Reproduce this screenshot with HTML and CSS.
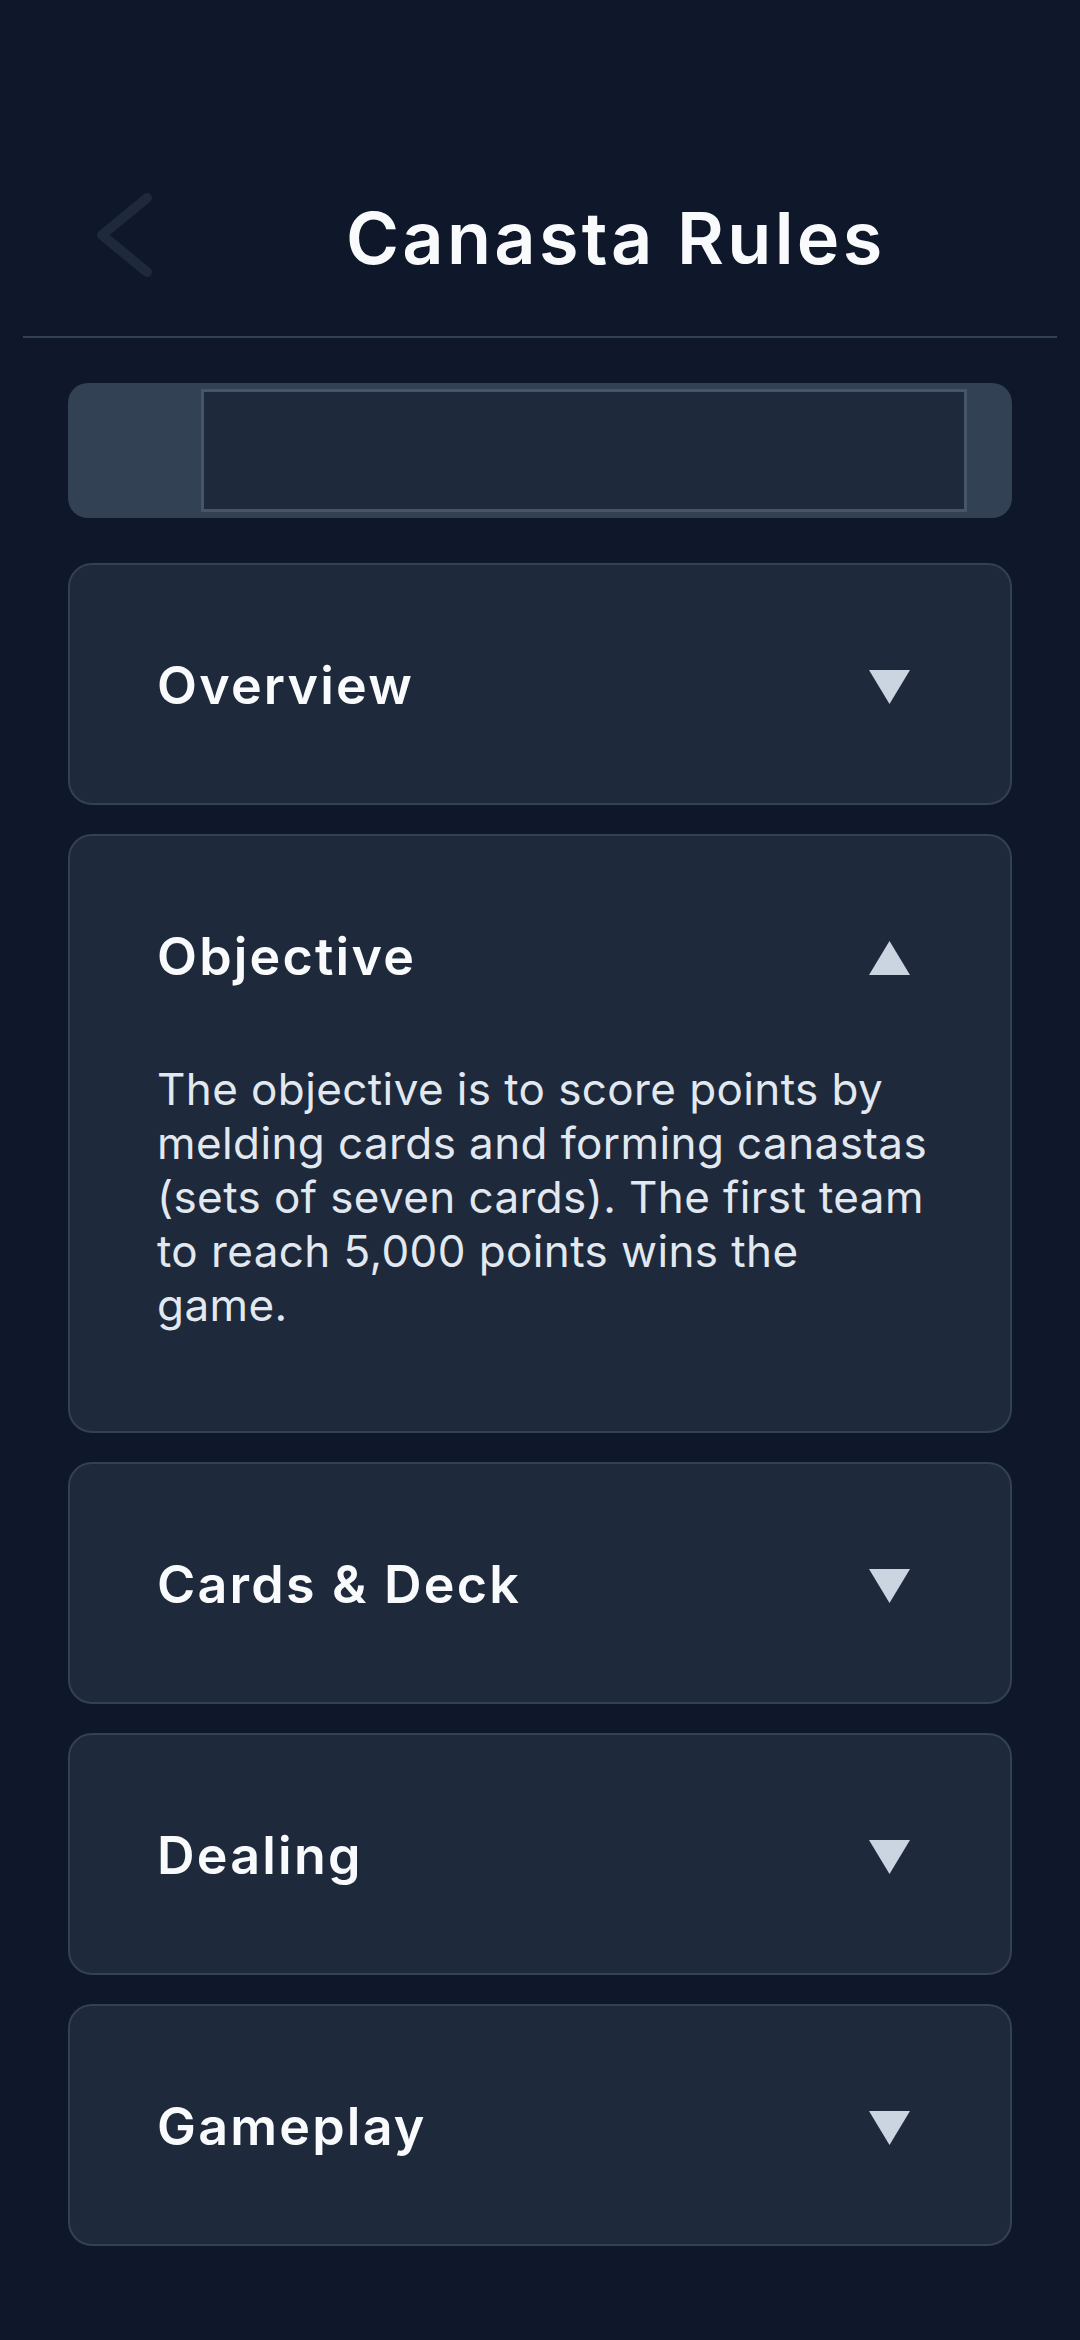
FILE: index.html
```html
<!DOCTYPE html>
<html lang="en">
<head>
<meta charset="utf-8">
<title>Canasta Rules</title>
<link rel="stylesheet" href="styles.css">
</head>
<body>
<div class="app">
  <header class="topbar">
    <button class="back" aria-label="Back">
      <svg width="64" height="96" viewBox="0 0 64 96"><polyline points="54,8 9,45 54,82" fill="none" stroke="#1e293b" stroke-width="10" stroke-linecap="round" stroke-linejoin="round"/></svg>
    </button>
    <h1 class="title">Canasta Rules</h1>
  </header>

  <div class="search">
    <input class="search-input" type="text" aria-label="Search rules">
  </div>

  <div class="list">
    <section class="card">
      <div class="card-head">
        <h2 class="card-title">Overview</h2>
        <svg class="arrow" width="41" height="34" viewBox="0 0 41 34"><polygon points="0,0 41,0 20.5,34" fill="#cbd5e1"/></svg>
      </div>
    </section>

    <section class="card open">
      <div class="card-head">
        <h2 class="card-title">Objective</h2>
        <svg class="arrow" width="41" height="34" viewBox="0 0 41 34"><polygon points="20.5,0 41,34 0,34" fill="#cbd5e1"/></svg>
      </div>
      <p class="card-body">The objective is to score points by melding cards and forming canastas (sets of seven cards). The first team to reach 5,000 points wins the game.</p>
    </section>

    <section class="card">
      <div class="card-head">
        <h2 class="card-title">Cards &amp; Deck</h2>
        <svg class="arrow" width="41" height="34" viewBox="0 0 41 34"><polygon points="0,0 41,0 20.5,34" fill="#cbd5e1"/></svg>
      </div>
    </section>

    <section class="card">
      <div class="card-head">
        <h2 class="card-title">Dealing</h2>
        <svg class="arrow" width="41" height="34" viewBox="0 0 41 34"><polygon points="0,0 41,0 20.5,34" fill="#cbd5e1"/></svg>
      </div>
    </section>

    <section class="card">
      <div class="card-head">
        <h2 class="card-title">Gameplay</h2>
        <svg class="arrow" width="41" height="34" viewBox="0 0 41 34"><polygon points="0,0 41,0 20.5,34" fill="#cbd5e1"/></svg>
      </div>
    </section>
  </div>
</div>
</body>
</html>
```

FILE: styles.css
```css
* { box-sizing: border-box; }

html, body {
  margin: 0;
  padding: 0;
  background: #0f172a;
}

body {
  font-family: Inter, "Noto Sans", "Liberation Sans", sans-serif;
  color: #f8fafc;
  min-height: 2340px;
}

.app {
  display: flex;
  flex-direction: column;
}

.topbar {
  margin: 0 23px;
  height: 338px;
  padding-top: 140px;
  border-bottom: 2px solid #334155;
  display: flex;
  align-items: center;
}

.back {
  margin-left: 70px;
  width: 64px;
  height: 96px;
  padding: 0;
  border: 0;
  background: transparent;
  display: flex;
}

.title {
  margin: 0 0 0 189px;
  font-size: 72px;
  line-height: 88px;
  font-weight: 600;
  letter-spacing: 3.3px;
  color: #f8fafc;
}

.search {
  margin: 45px 68px 0;
  height: 135px;
  background: #334155;
  border-radius: 20px;
  padding: 6px 45px 6px 133px;
  display: flex;
}

.search-input {
  flex: 1;
  height: 100%;
  margin: 0;
  border: 3px solid #475569;
  background: #1e293b;
  border-radius: 0;
  outline: none;
}

.list {
  margin: 45px 68px 0;
  display: flex;
  flex-direction: column;
  gap: 29px;
}

.card {
  background: #1e293b;
  border: 2px solid #334155;
  border-radius: 24px;
}

.card-head {
  display: flex;
  align-items: center;
  justify-content: space-between;
  padding: 90px 100px 86px 87px;
}

.open .card-head {
  padding-bottom: 0;
}

.card-title {
  margin: 0;
  font-size: 52px;
  line-height: 62px;
  font-weight: 600;
  letter-spacing: 2.2px;
  color: #f8fafc;
}

.arrow {
  display: block;
  margin-top: 2px;
}

.card-body {
  margin: 0;
  padding: 74px 78px 99px 87px;
  font-size: 44px;
  line-height: 54px;
  font-weight: 400;
  letter-spacing: 0.4px;
  color: #e2e8f0;
}
```
